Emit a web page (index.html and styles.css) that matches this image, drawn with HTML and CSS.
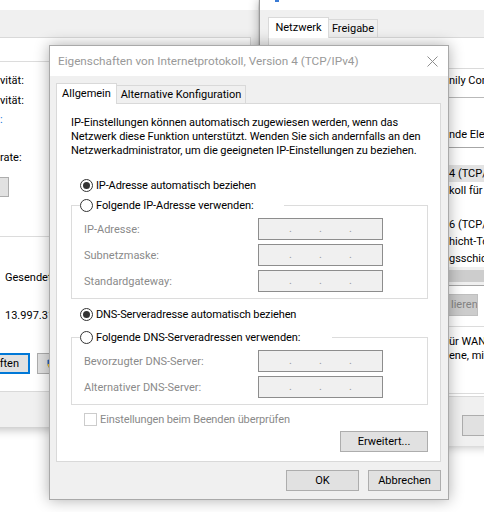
FILE: index.html
```html
<!DOCTYPE html>
<html lang="de">
<head>
<meta charset="utf-8">
<title>Eigenschaften von Internetprotokoll, Version 4 (TCP/IPv4)</title>
<link rel="stylesheet" href="styles.css">
</head>
<body>
<div class="desk">

  <section class="win win-left">
    <div class="cap"></div>
    <div class="tabstrip"></div>
    <div class="wl-panel">
      <div class="gline g1"></div>
      <div class="wl-row r1">vität:</div>
      <div class="wl-row r2">vität:</div>
      <div class="wl-row r3 link">:</div>
      <div class="wl-row r4">rate:</div>
      <div class="wl-btn"></div>
      <div class="gline g2"></div>
      <div class="wl-row r5 ind">Gesendet —</div>
      <div class="wl-row r6 ind">13.997.312</div>
      <div class="wl-btns">
        <div class="btn btn-default">ften</div>
        <div class="btn btn-shield">
          <svg class="shield" width="10" height="12" viewBox="0 0 10 12"><path d="M5 0.5 L9.5 2 V6 C9.5 8.8 7.5 10.6 5 11.5 C2.5 10.6 0.5 8.8 0.5 6 V2 Z" fill="#2b5fb3"/><path d="M5 0.5 L9.5 2 V6 H5 Z" fill="#f2c230"/><path d="M5 6 H0.5 C0.5 8.8 2.5 10.6 5 11.5 Z" fill="#f2c230"/></svg>
        </div>
      </div>
    </div>
  </section>

  <section class="win win-right">
    <div class="cap"><span class="icon-tail"></span></div>
    <div class="rtabs">
      <div class="rtab rtab-sel">Netzwerk</div>
      <div class="rtab">Freigabe</div>
    </div>
    <div class="wr-panel">
      <div class="wr-textbox">nily Cont</div>
      <div class="wr-line lbl">nde Elem</div>
      <div class="wr-list">
        <div class="li"></div>
        <div class="li li-sel">4 (TCP/</div>
        <div class="li">koll für N</div>
        <div class="li"></div>
        <div class="li">6 (TCP/</div>
        <div class="li">hicht-To</div>
        <div class="li">gsschich</div>
        <div class="hscroll"><div class="thumb"></div></div>
      </div>
      <div class="wr-btn-dis">lieren</div>
      <div class="wr-group">
        <div class="wr-desc">ür WAN</div>
        <div class="wr-desc">ene, mit</div>
      </div>
    </div>
    <div class="btn wr-btn-bottom"></div>
  </section>

  <div class="dlg" role="dialog">
    <header class="dlg-title">
      <span class="dlg-title-text">Eigenschaften von Internetprotokoll, Version 4 (TCP/IPv4)</span>
      <svg class="dlg-close" width="11" height="11" viewBox="0 0 11 11"><path d="M0.5 0.5 L10.5 10.5 M10.5 0.5 L0.5 10.5" stroke="#8e8e8e" stroke-width="1" fill="none"/></svg>
    </header>
    <div class="dlg-body">
      <div class="tabs">
        <div class="tab tab-sel">Allgemein</div>
        <div class="tab tab-alt">Alternative Konfiguration</div>
      </div>
      <div class="panel">
        <p class="intro">IP-Einstellungen können automatisch zugewiesen werden, wenn das<br>Netzwerk diese Funktion unterstützt. Wenden Sie sich andernfalls an den<br>Netzwerkadministrator, um die geeigneten IP-Einstellungen zu beziehen.</p>

        <div class="radio-row"><span class="radio on"></span><span>IP-Adresse automatisch beziehen</span></div>
        <fieldset class="grp">
          <legend class="leg leg-ip"><span class="radio"></span><span>Folgende IP-Adresse verwenden:</span></legend>
          <div class="fields">
            <span class="flabel">IP-Adresse:</span>
            <span class="ipbox"><span>.</span><span>.</span><span>.</span></span>
            <span class="flabel">Subnetzmaske:</span>
            <span class="ipbox"><span>.</span><span>.</span><span>.</span></span>
            <span class="flabel">Standardgateway:</span>
            <span class="ipbox"><span>.</span><span>.</span><span>.</span></span>
          </div>
        </fieldset>

        <div class="radio-row r-dns"><span class="radio on"></span><span>DNS-Serveradresse automatisch beziehen</span></div>
        <fieldset class="grp grp-dns">
          <legend class="leg leg-dns"><span class="radio"></span><span>Folgende DNS-Serveradressen verwenden:</span></legend>
          <div class="fields">
            <span class="flabel">Bevorzugter DNS-Server:</span>
            <span class="ipbox"><span>.</span><span>.</span><span>.</span></span>
            <span class="flabel">Alternativer DNS-Server:</span>
            <span class="ipbox"><span>.</span><span>.</span><span>.</span></span>
          </div>
        </fieldset>

        <div class="check-row"><span class="checkbox"></span><span>Einstellungen beim Beenden überprüfen</span></div>
        <div class="adv-row"><div class="btn btn-adv">Erweitert...</div></div>
      </div>
      <div class="dlg-buttons">
        <div class="btn btn-dlg">OK</div>
        <div class="btn btn-dlg">Abbrechen</div>
      </div>
    </div>
  </div>

</div>
</body>
</html>
```

FILE: styles.css
```css
html, body {
  margin: 0;
  padding: 0;
}
body {
  width: 484px;
  height: 512px;
  overflow: hidden;
  background: #ffffff;
  font-family: Roboto, "Noto Sans", sans-serif;
  font-size: 11px;
  color: #000;
}
.desk {
  position: relative;
  width: 484px;
  height: 512px;
  overflow: hidden;
}

.btn {
  box-sizing: border-box;
  background: #e1e1e1;
  border: 1px solid #adadad;
  display: flex;
  align-items: center;
  justify-content: center;
  white-space: nowrap;
}

/* ---------- left background window ---------- */
.win {
  position: absolute;
  top: 0;
  background: #f0f0f0;
  display: flex;
  flex-direction: column;
}
.win-left {
  left: -21px;
  width: 279px;
  height: 427px;
  box-shadow: 0 2px 10px rgba(0, 0, 0, 0.28);
}
.cap {
  height: 10px;
  background: #fff;
  flex: none;
  display: flex;
}
.tabstrip {
  height: 27px;
  flex: none;
}
.wl-panel {
  box-sizing: border-box;
  height: 355px;
  margin-right: 7px;
  background: #fff;
  border: 1px solid #d9d9d9;
  padding-left: 20px;
  display: flex;
  flex-direction: column;
  flex: none;
}
.gline {
  border-top: 1px solid #dcdcdc;
  height: 0;
  margin-right: -2px;
}
.g1 { margin-top: 23px; }
.g2 { margin-top: 39px; }
.wl-row {
  line-height: 16px;
  height: 16px;
  white-space: nowrap;
}
.ind { padding-left: 5px; }
.r1 { margin-top: 11px; }
.r2 { margin-top: 4px; }
.r3 { margin-top: 3px; }
.r4 { margin-top: 22px; }
.r5 { margin-top: 33px; }
.r6 { margin-top: 22px; }
.link { color: #1a73d9; }
.wl-btn {
  box-sizing: border-box;
  margin-top: 11px;
  margin-left: -60px;
  width: 69px;
  height: 20px;
  background: #e1e1e1;
  border: 1px solid #adadad;
}
.wl-btns {
  margin-top: 29px;
  height: 21px;
  display: flex;
}
.btn-default {
  margin-left: -47px;
  width: 77px;
  border: 2px solid #0078d7;
  justify-content: flex-end;
  padding-right: 9px;
}
.btn-shield {
  margin-left: 7px;
  width: 75px;
  justify-content: flex-start;
  padding-left: 9px;
}
.shield { display: block; }

/* ---------- right background window ---------- */
.win-right {
  left: 259px;
  width: 240px;
  height: 446px;
  border-left: 1px solid #9a9a9a;
  box-shadow: 0 0 10px rgba(0, 0, 0, 0.3);
}
.icon-tail {
  width: 4px;
  height: 2px;
  margin-left: 15px;
  background: #3a7bd5;
}
.rtabs {
  margin-top: 7px;
  padding-left: 8px;
  height: 20px;
  display: flex;
  align-items: flex-end;
  flex: none;
}
.rtab {
  box-sizing: border-box;
  height: 18px;
  width: 50px;
  margin-left: -1px;
  border: 1px solid #d9d9d9;
  border-bottom: none;
  background: #f0f0f0;
  display: flex;
  align-items: center;
  justify-content: center;
}
.rtab-sel {
  position: relative;
  z-index: 1;
  width: 61px;
  height: 21px;
  margin-left: 0;
  margin-bottom: -1px;
  background: #fff;
  padding-bottom: 2px;
}
.wr-panel {
  box-sizing: border-box;
  margin-left: 8px;
  height: 360px;
  background: #fff;
  border: 1px solid #d9d9d9;
  padding-left: 180px;
  display: flex;
  flex-direction: column;
  flex: none;
  white-space: nowrap;
}
.wr-textbox {
  box-sizing: border-box;
  margin-top: 30px;
  height: 30px;
  border-top: 1px solid #dadada;
  border-bottom: 1px solid #b9b9b9;
  line-height: 16px;
  padding-top: 4px;
}
.lbl {
  margin-top: 29px;
  line-height: 16px;
  height: 16px;
}
.wr-list {
  margin-top: 4px;
  border-top: 1px solid #a6a6a6;
  border-bottom: 1px solid #a6a6a6;
  display: flex;
  flex-direction: column;
}
.li {
  height: 17px;
  line-height: 17px;
}
.li-sel { background: #e3e3e3; }
.hscroll {
  height: 18px;
  background: #f0f0f0;
  display: flex;
  align-items: center;
}
.thumb {
  height: 12px;
  width: 100%;
  background: #cdcdcd;
}
.wr-btn-dis {
  box-sizing: border-box;
  margin-top: 8px;
  width: 29px;
  height: 22px;
  background: #cccccc;
  border: 1px solid #bfbfbf;
  border-left: none;
  color: #838383;
  line-height: 20px;
  padding-left: 2px;
  overflow: hidden;
}
.wr-group {
  box-sizing: border-box;
  margin-top: 10px;
  height: 68px;
  border-top: 1px solid #dcdcdc;
  border-bottom: 1px solid #dcdcdc;
  padding-top: 8px;
}
.wr-desc {
  line-height: 14px;
  height: 14px;
}
.wr-btn-bottom {
  margin-top: 18px;
  margin-left: 202px;
  width: 75px;
  height: 21px;
  flex: none;
}

/* ---------- main dialog ---------- */
.dlg {
  position: absolute;
  left: 49px;
  top: 45px;
  width: 400px;
  height: 455px;
  box-sizing: border-box;
  border: 1px solid #a9a9a9;
  background: #f0f0f0;
  box-shadow: 0 0 14px rgba(0, 0, 0, 0.32);
  display: flex;
  flex-direction: column;
}
.dlg-title {
  height: 30px;
  flex: none;
  background: #fff;
  display: flex;
  align-items: center;
  padding-left: 8px;
}
.dlg-title-text {
  font-size: 11.75px;
  color: #999999;
  white-space: nowrap;
}
.dlg-close {
  margin-left: auto;
  margin-right: 10px;
  display: block;
}
.dlg-body {
  flex: 1;
  padding: 7px 7px 0 6px;
  display: flex;
  flex-direction: column;
}
.tabs {
  height: 20px;
  display: flex;
  align-items: flex-end;
}
.tab {
  box-sizing: border-box;
  border: 1px solid #d9d9d9;
  border-bottom: none;
  display: flex;
  align-items: center;
  justify-content: center;
  white-space: nowrap;
}
.tab-sel {
  position: relative;
  z-index: 1;
  width: 61px;
  height: 21px;
  margin-bottom: -1px;
  background: #fff;
  padding-bottom: 1px;
}
.tab-alt {
  width: 130px;
  height: 18px;
  margin-left: -1px;
  background: #f0f0f0;
}
.panel {
  box-sizing: border-box;
  width: 385px;
  height: 359px;
  border: 1px solid #d9d9d9;
  background: #fff;
  padding: 12px 0 0 14px;
  display: flex;
  flex-direction: column;
}
.intro {
  margin: 0;
  line-height: 14px;
  white-space: nowrap;
  letter-spacing: -0.08px;
}
.radio-row {
  margin-top: 19px;
  height: 16px;
  padding-left: 9px;
  display: flex;
  align-items: center;
  gap: 3px;
  white-space: nowrap;
  letter-spacing: -0.12px;
}
.r-dns { margin-top: 7px; }
.radio {
  box-sizing: border-box;
  width: 13px;
  height: 13px;
  border: 1px solid #333;
  border-radius: 50%;
  background: #fff;
  flex: none;
  display: flex;
  align-items: center;
  justify-content: center;
}
.radio.on::after {
  content: "";
  width: 7px;
  height: 7px;
  border-radius: 50%;
  background: #333;
}
.grp {
  box-sizing: border-box;
  width: 357px;
  margin: 4px 0 0 0;
  padding: 5px 0 6px 0;
  border: 1px solid #dcdcdc;
  min-width: 0;
}
.grp-dns { margin-top: 7px; }
.leg {
  box-sizing: border-box;
  padding: 0;
  margin-left: 8px;
  height: 16px;
  display: flex;
  align-items: center;
  gap: 3px;
  white-space: nowrap;
  background: #fff;
  letter-spacing: -0.06px;
}
.leg-ip { width: 204px; }
.leg-dns { width: 252px; }
.fields {
  display: grid;
  grid-template-columns: 174px 125px;
  row-gap: 4px;
  padding-left: 12px;
  align-items: center;
}
.flabel {
  color: #8a8a8a;
  white-space: nowrap;
}
.ipbox {
  box-sizing: border-box;
  height: 22px;
  border: 1px solid #8d8d8d;
  background: #f0f0f0;
  display: flex;
  padding-left: 30px;
  gap: 27px;
  line-height: 19px;
  color: #9a9a9a;
}
.ipbox span {
  width: 3px;
  text-align: center;
}
.check-row {
  margin-top: 6px;
  height: 16px;
  padding-left: 13px;
  display: flex;
  align-items: center;
  gap: 3px;
  color: #8a8a8a;
  white-space: nowrap;
  letter-spacing: -0.12px;
}
.checkbox {
  box-sizing: border-box;
  width: 13px;
  height: 13px;
  border: 1px solid #cccccc;
  background: #fff;
  flex: none;
}
.adv-row {
  margin-top: 4px;
  width: 357px;
  display: flex;
  justify-content: flex-end;
}
.btn-adv {
  width: 88px;
  height: 21px;
}
.dlg-buttons {
  margin-top: 8px;
  display: flex;
  justify-content: flex-end;
  gap: 9px;
}
.btn-dlg {
  width: 73px;
  height: 21px;
}
```
